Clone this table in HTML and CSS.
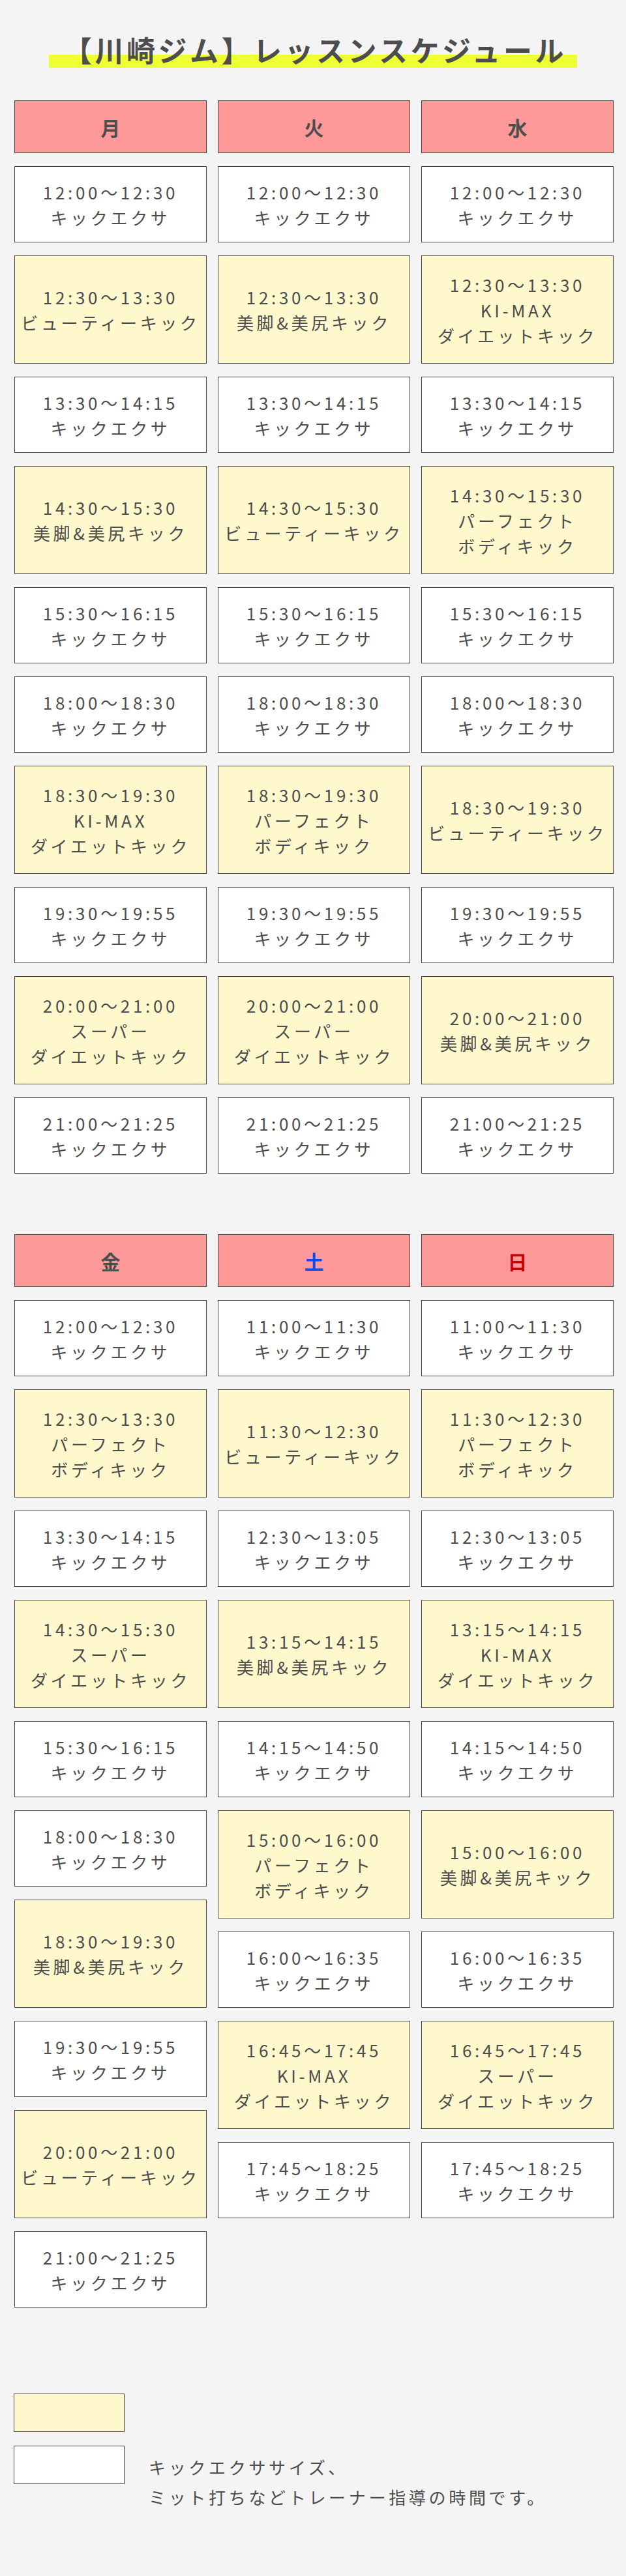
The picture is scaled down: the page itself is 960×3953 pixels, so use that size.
FILE: index.html
```html
<!DOCTYPE html>
<html lang="ja">
<head>
    <meta charset="UTF-8">
    <meta name="viewport" content="width=device-width, initial-scale=1.0">
    <title>川崎ジム レッスンスケジュール</title>
    <link rel="stylesheet" href="styles.css">
</head>
<body>

<h1 class="title"><span>【川崎ジム】レッスンスケジュール</span></h1>

<!-- 月〜水 -->
<div class="schedule">
    <div class="day">
        <div class="day-head">月</div>
        <div class="slot">12:00〜12:30<br>キックエクサ</div>
        <div class="slot lesson">12:30〜13:30<br>ビューティーキック</div>
        <div class="slot">13:30〜14:15<br>キックエクサ</div>
        <div class="slot lesson">14:30〜15:30<br>美脚&amp;美尻キック</div>
        <div class="slot">15:30〜16:15<br>キックエクサ</div>
        <div class="slot">18:00〜18:30<br>キックエクサ</div>
        <div class="slot lesson">18:30〜19:30<br>KI-MAX<br>ダイエットキック</div>
        <div class="slot">19:30〜19:55<br>キックエクサ</div>
        <div class="slot lesson">20:00〜21:00<br>スーパー<br>ダイエットキック</div>
        <div class="slot">21:00〜21:25<br>キックエクサ</div>
    </div>
    <div class="day">
        <div class="day-head">火</div>
        <div class="slot">12:00〜12:30<br>キックエクサ</div>
        <div class="slot lesson">12:30〜13:30<br>美脚&amp;美尻キック</div>
        <div class="slot">13:30〜14:15<br>キックエクサ</div>
        <div class="slot lesson">14:30〜15:30<br>ビューティーキック</div>
        <div class="slot">15:30〜16:15<br>キックエクサ</div>
        <div class="slot">18:00〜18:30<br>キックエクサ</div>
        <div class="slot lesson">18:30〜19:30<br>パーフェクト<br>ボディキック</div>
        <div class="slot">19:30〜19:55<br>キックエクサ</div>
        <div class="slot lesson">20:00〜21:00<br>スーパー<br>ダイエットキック</div>
        <div class="slot">21:00〜21:25<br>キックエクサ</div>
    </div>
    <div class="day">
        <div class="day-head">水</div>
        <div class="slot">12:00〜12:30<br>キックエクサ</div>
        <div class="slot lesson">12:30〜13:30<br>KI-MAX<br>ダイエットキック</div>
        <div class="slot">13:30〜14:15<br>キックエクサ</div>
        <div class="slot lesson">14:30〜15:30<br>パーフェクト<br>ボディキック</div>
        <div class="slot">15:30〜16:15<br>キックエクサ</div>
        <div class="slot">18:00〜18:30<br>キックエクサ</div>
        <div class="slot lesson">18:30〜19:30<br>ビューティーキック</div>
        <div class="slot">19:30〜19:55<br>キックエクサ</div>
        <div class="slot lesson">20:00〜21:00<br>美脚&amp;美尻キック</div>
        <div class="slot">21:00〜21:25<br>キックエクサ</div>
    </div>
</div>

<!-- 金〜日 -->
<div class="schedule weekend">
    <div class="day">
        <div class="day-head">金</div>
        <div class="slot">12:00〜12:30<br>キックエクサ</div>
        <div class="slot lesson">12:30〜13:30<br>パーフェクト<br>ボディキック</div>
        <div class="slot">13:30〜14:15<br>キックエクサ</div>
        <div class="slot lesson">14:30〜15:30<br>スーパー<br>ダイエットキック</div>
        <div class="slot">15:30〜16:15<br>キックエクサ</div>
        <div class="slot">18:00〜18:30<br>キックエクサ</div>
        <div class="slot lesson">18:30〜19:30<br>美脚&amp;美尻キック</div>
        <div class="slot">19:30〜19:55<br>キックエクサ</div>
        <div class="slot lesson">20:00〜21:00<br>ビューティーキック</div>
        <div class="slot">21:00〜21:25<br>キックエクサ</div>
    </div>
    <div class="day">
        <div class="day-head sat">土</div>
        <div class="slot">11:00〜11:30<br>キックエクサ</div>
        <div class="slot lesson">11:30〜12:30<br>ビューティーキック</div>
        <div class="slot">12:30〜13:05<br>キックエクサ</div>
        <div class="slot lesson">13:15〜14:15<br>美脚&amp;美尻キック</div>
        <div class="slot">14:15〜14:50<br>キックエクサ</div>
        <div class="slot lesson">15:00〜16:00<br>パーフェクト<br>ボディキック</div>
        <div class="slot">16:00〜16:35<br>キックエクサ</div>
        <div class="slot lesson">16:45〜17:45<br>KI-MAX<br>ダイエットキック</div>
        <div class="slot">17:45〜18:25<br>キックエクサ</div>
    </div>
    <div class="day">
        <div class="day-head sun">日</div>
        <div class="slot">11:00〜11:30<br>キックエクサ</div>
        <div class="slot lesson">11:30〜12:30<br>パーフェクト<br>ボディキック</div>
        <div class="slot">12:30〜13:05<br>キックエクサ</div>
        <div class="slot lesson">13:15〜14:15<br>KI-MAX<br>ダイエットキック</div>
        <div class="slot">14:15〜14:50<br>キックエクサ</div>
        <div class="slot lesson">15:00〜16:00<br>美脚&amp;美尻キック</div>
        <div class="slot">16:00〜16:35<br>キックエクサ</div>
        <div class="slot lesson">16:45〜17:45<br>スーパー<br>ダイエットキック</div>
        <div class="slot">17:45〜18:25<br>キックエクサ</div>
    </div>
</div>

<div class="legend">
    <div class="legend-row">
        <div class="swatch lesson"></div>
    </div>
    <div class="legend-row">
        <div class="swatch"></div>
        <p class="legend-text">キックエクササイズ、<br>ミット打ちなどトレーナー指導の時間です。</p>
    </div>
</div>

</body>
</html>
```

FILE: styles.css
```css
body {
    margin: 0;
    padding: 0;
    font-family: 'Noto Sans CJK JP', 'Noto Sans', sans-serif;
    background-color: #f4f4f4;
    color: #4d4d4d;
}

.title {
    margin: 0;
    padding-top: 54px;
    text-align: center;
    font-size: 44px;
    font-weight: bold;
    line-height: 1;
    letter-spacing: 4.5px;
}

.title span {
    display: inline-block;
    padding: 0 16px 6px 22px;
    background: linear-gradient(transparent 60%, #eeff33 60%);
}

.schedule {
    display: grid;
    grid-template-columns: repeat(3, 295px);
    column-gap: 17px;
    margin: 50px 0 0 22px;
}

.weekend {
    margin-top: 93px;
}

.day {
    display: flex;
    flex-direction: column;
    gap: 20px;
}

.day-head {
    height: 79px;
    display: flex;
    align-items: center;
    justify-content: center;
    background-color: #ff9999;
    border: 1px solid #444;
    font-size: 30px;
    font-weight: bold;
}

.day-head.sat {
    color: #0050f5;
}

.day-head.sun {
    color: #c40000;
}

.slot {
    box-sizing: border-box;
    height: 117px;
    display: flex;
    flex-direction: column;
    justify-content: center;
    align-items: center;
    background-color: #fff;
    border: 1px solid #444;
    font-size: 26px;
    line-height: 39px;
    letter-spacing: 0.18em;
    text-align: center;
}

.slot.lesson {
    height: 166px;
    background-color: #fff8cc;
}

.legend {
    margin-top: 132px;
    padding: 0 0 130px 21px;
}

.legend-row {
    display: flex;
    align-items: flex-start;
    margin-bottom: 21px;
}

.swatch {
    box-sizing: border-box;
    width: 170px;
    height: 59px;
    background-color: #fff;
    border: 1px solid #444;
}

.swatch.lesson {
    background-color: #fff8cc;
}

.legend-text {
    margin: 10px 0 0 37px;
    font-size: 26px;
    line-height: 46px;
    letter-spacing: 0.18em;
}
```
